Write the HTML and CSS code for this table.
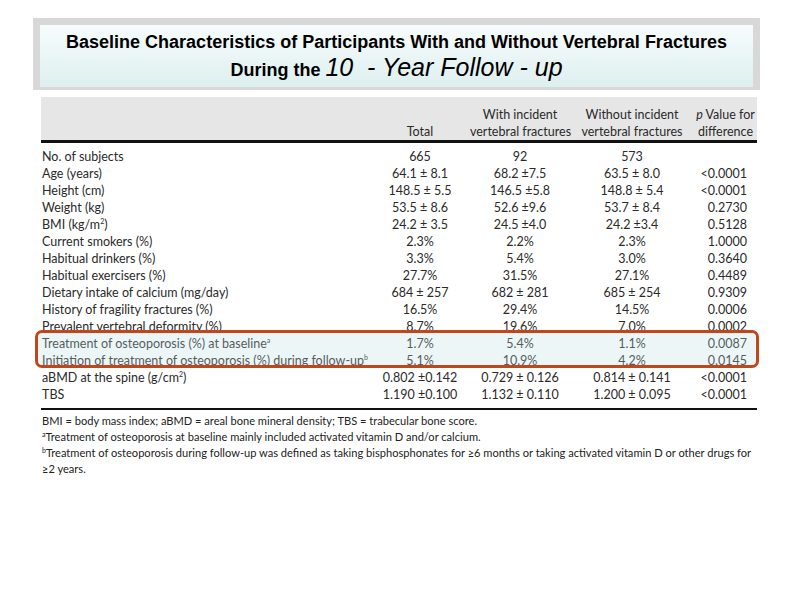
FILE: index.html
```html
<!DOCTYPE html>
<html>
<head>
<meta charset="utf-8">
<link rel="stylesheet" href="styles.css">
</head>
<body>
<div class="page">
  <div class="title-frame">
    <div class="title-inner">
      <div class="t1">Baseline Characteristics of Participants With and Without Vertebral Fractures</div>
      <div class="t2">During the <span class="big">10  - Year Follow - up</span></div>
    </div>
  </div>

  <div class="table-wrap">
    <div class="thead row-grid">
      <div class="lbl"></div>
      <div class="c"><br>Total</div>
      <div class="c">With incident<br>vertebral fractures</div>
      <div class="c">Without incident<br>vertebral fractures</div>
      <div class="c"><i>p</i> Value for<br>difference</div>
    </div>
    <div class="tbody">
      <div class="row row-grid"><div class="lbl">No. of subjects</div><div class="c">665</div><div class="c">92</div><div class="c">573</div><div class="p"></div></div>
      <div class="row row-grid"><div class="lbl">Age (years)</div><div class="c">64.1 ± 8.1</div><div class="c">68.2 ±7.5</div><div class="c">63.5 ± 8.0</div><div class="p">&lt;0.0001</div></div>
      <div class="row row-grid"><div class="lbl">Height (cm)</div><div class="c">148.5 ± 5.5</div><div class="c">146.5 ±5.8</div><div class="c">148.8 ± 5.4</div><div class="p">&lt;0.0001</div></div>
      <div class="row row-grid"><div class="lbl">Weight (kg)</div><div class="c">53.5 ± 8.6</div><div class="c">52.6 ±9.6</div><div class="c">53.7 ± 8.4</div><div class="p">0.2730</div></div>
      <div class="row row-grid"><div class="lbl">BMI (kg/m<sup>2</sup>)</div><div class="c">24.2 ± 3.5</div><div class="c">24.5 ±4.0</div><div class="c">24.2 ±3.4</div><div class="p">0.5128</div></div>
      <div class="row row-grid"><div class="lbl">Current smokers (%)</div><div class="c">2.3%</div><div class="c">2.2%</div><div class="c">2.3%</div><div class="p">1.0000</div></div>
      <div class="row row-grid"><div class="lbl">Habitual drinkers (%)</div><div class="c">3.3%</div><div class="c">5.4%</div><div class="c">3.0%</div><div class="p">0.3640</div></div>
      <div class="row row-grid"><div class="lbl">Habitual exercisers (%)</div><div class="c">27.7%</div><div class="c">31.5%</div><div class="c">27.1%</div><div class="p">0.4489</div></div>
      <div class="row row-grid"><div class="lbl">Dietary intake of calcium (mg/day)</div><div class="c">684 ± 257</div><div class="c">682 ± 281</div><div class="c">685 ± 254</div><div class="p">0.9309</div></div>
      <div class="row row-grid"><div class="lbl">History of fragility fractures (%)</div><div class="c">16.5%</div><div class="c">29.4%</div><div class="c">14.5%</div><div class="p">0.0006</div></div>
      <div class="row row-grid"><div class="lbl">Prevalent vertebral deformity (%)</div><div class="c">8.7%</div><div class="c">19.6%</div><div class="c">7.0%</div><div class="p">0.0002</div></div>
      <div class="row row-grid"><div class="lbl">Treatment of osteoporosis (%) at baseline<sup>a</sup></div><div class="c">1.7%</div><div class="c">5.4%</div><div class="c">1.1%</div><div class="p">0.0087</div></div>
      <div class="row row-grid"><div class="lbl">Initiation of treatment of osteoporosis (%) during follow-up<sup>b</sup></div><div class="c">5.1%</div><div class="c">10.9%</div><div class="c">4.2%</div><div class="p">0.0145</div></div>
      <div class="row row-grid"><div class="lbl">aBMD at the spine (g/cm<sup>2</sup>)</div><div class="c">0.802 ±0.142</div><div class="c">0.729 ± 0.126</div><div class="c">0.814 ± 0.141</div><div class="p">&lt;0.0001</div></div>
      <div class="row row-grid"><div class="lbl">TBS</div><div class="c">1.190 ±0.100</div><div class="c">1.132 ± 0.110</div><div class="c">1.200 ± 0.095</div><div class="p">&lt;0.0001</div></div>
    </div>
    <div class="notes">
      <div>BMI = body mass index; aBMD = areal bone mineral density; TBS = trabecular bone score.</div>
      <div><sup>a</sup>Treatment of osteoporosis at baseline mainly included activated vitamin D and/or calcium.</div>
      <div><sup>b</sup>Treatment of osteoporosis during follow-up was defined as taking bisphosphonates for ≥6 months or taking activated vitamin D or other drugs for<br>≥2 years.</div>
    </div>
    <div class="highlight"></div>
  </div>
</div>
</body>
</html>
```

FILE: styles.css
```css
body {
  margin: 0;
  background: #ffffff;
  font-family: "Lato", "Open Sans", sans-serif;
  color: #2a2a2a;
}

.page {
  padding: 18px 0 0 33px;
}

.title-frame {
  width: 713px;
  padding: 7px 7px 3px 7px;
  background: #d8d8d8;
}

.title-inner {
  height: 62px;
  box-sizing: border-box;
  padding-top: 6px;
  background: linear-gradient(#f7fcfc, #deefef);
  font-family: "Liberation Sans", Arial, sans-serif;
  text-align: center;
  color: #000;
}

.t1 {
  font-weight: bold;
  font-size: 18px;
  line-height: 22px;
}

.t2 {
  font-weight: bold;
  font-size: 18px;
  line-height: 29px;
}

.t2 .big {
  font-style: italic;
  font-weight: normal;
  font-size: 25px;
  white-space: pre;
}

.table-wrap {
  position: relative;
  width: 716px;
  margin: 7px 0 0 8px;
  font-size: 12.5px;
}

.row-grid {
  display: grid;
  grid-template-columns: 329px 100px 100px 124px 63px;
}

.thead {
  background: #e6e6e6;
  height: 46px;
  box-sizing: border-box;
  padding-top: 9px;
  line-height: 17px;
  border-bottom: 3px solid #111;
}

.thead .c {
  text-align: center;
  white-space: nowrap;
}

.tbody {
  padding: 5px 0 5px;
  border-bottom: 2px solid #111;
}

.row {
  height: 17px;
  line-height: 17px;
  white-space: nowrap;
}

.lbl {
  padding-left: 1px;
}

.c {
  text-align: center;
}

.p {
  text-align: right;
  padding-right: 10px;
}

sup {
  font-size: 7px;
  line-height: 0;
  vertical-align: 5px;
}

.notes {
  padding: 3px 0 0 1px;
  font-size: 11.1px;
  line-height: 16px;
  color: #222;
}

.notes sup {
  font-size: 7px;
  vertical-align: 4px;
}

.highlight {
  position: absolute;
  left: -6px;
  top: 233px;
  width: 718px;
  height: 32px;
  border: 3px solid #c0461b;
  border-radius: 7px;
  background: rgba(192, 224, 226, 0.28);
}
```
